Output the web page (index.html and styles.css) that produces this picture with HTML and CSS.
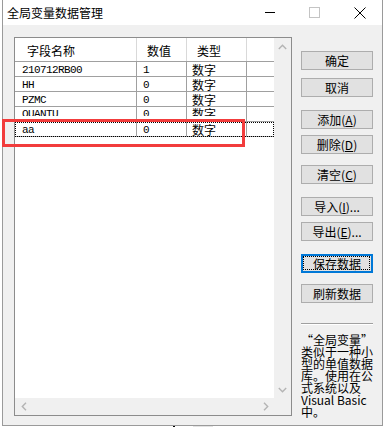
FILE: index.html
```html
<!DOCTYPE html>
<html lang="zh-CN">
<head>
    <meta charset="UTF-8">
    <meta name="viewport" content="width=device-width, initial-scale=1.0">
    <title>全局变量数据管理</title>
    <link rel="stylesheet" href="styles.css">
</head>
<body>
    <div class="window">
        <div class="titlebar">
            <span class="title">全局变量数据管理</span>
            <span class="ctl"><svg width="10" height="1"><rect width="10" height="1" fill="#000"/></svg></span>
            <span class="ctl"><svg width="11" height="11"><rect x="0.5" y="0.5" width="10" height="10" fill="none" stroke="#c4c4c4"/></svg></span>
            <span class="ctl"><svg width="12" height="12"><path d="M0.5 0.5 L11.5 11.5 M11.5 0.5 L0.5 11.5" stroke="#000" stroke-width="1" fill="none"/></svg></span>
        </div>
        <div class="client">
            <div class="list">
                <div class="list-main">
                    <div class="grid">
                        <div class="row head">
                            <div class="cell c1">字段名称</div>
                            <div class="cell c2">数值</div>
                            <div class="cell c3">类型</div>
                            <div class="cell c4"></div>
                        </div>
                        <div class="row">
                            <div class="cell c1 mono">210712RB00</div>
                            <div class="cell c2 mono">1</div>
                            <div class="cell c3">数字</div>
                            <div class="cell c4"></div>
                        </div>
                        <div class="row">
                            <div class="cell c1 mono">HH</div>
                            <div class="cell c2 mono">0</div>
                            <div class="cell c3">数字</div>
                            <div class="cell c4"></div>
                        </div>
                        <div class="row">
                            <div class="cell c1 mono">PZMC</div>
                            <div class="cell c2 mono">0</div>
                            <div class="cell c3">数字</div>
                            <div class="cell c4"></div>
                        </div>
                        <div class="row">
                            <div class="cell c1 mono"><span class="clip">QUANTU</span></div>
                            <div class="cell c2 mono"><span class="clip">0</span></div>
                            <div class="cell c3"><span class="clip">数字</span></div>
                            <div class="cell c4"></div>
                        </div>
                        <div class="row selected">
                            <div class="cell c1 mono">aa</div>
                            <div class="cell c2 mono">0</div>
                            <div class="cell c3">数字</div>
                            <div class="cell c4"></div>
                        </div>
                    </div>
                    <div class="vscroll">
                        <div class="arrow"><svg width="9" height="6"><polyline points="0.8,5 4.5,1.3 8.2,5" fill="none" stroke="#b4b4b4" stroke-width="1.4"/></svg></div>
                        <div class="arrow"><svg width="9" height="6"><polyline points="0.8,1 4.5,4.7 8.2,1" fill="none" stroke="#b4b4b4" stroke-width="1.4"/></svg></div>
                    </div>
                </div>
                <div class="hscroll">
                    <div class="htrack">
                        <div class="arrow"><svg width="6" height="9"><polyline points="5,0.8 1.3,4.5 5,8.2" fill="none" stroke="#b4b4b4" stroke-width="1.4"/></svg></div>
                        <div class="arrow"><svg width="6" height="9"><polyline points="1,0.8 4.7,4.5 1,8.2" fill="none" stroke="#b4b4b4" stroke-width="1.4"/></svg></div>
                    </div>
                    <div class="corner"></div>
                </div>
            </div>
            <div class="side">
                <div class="btn">确定</div>
                <div class="btn gap-m">取消</div>
                <div class="btn gap-xl">添加(<u>A</u>)</div>
                <div class="btn gap-s">删除(<u>D</u>)</div>
                <div class="btn gap-l">清空(<u>C</u>)</div>
                <div class="btn gap-xl">导入(<u>I</u>)...</div>
                <div class="btn gap-s">导出(<u>E</u>)...</div>
                <div class="btn gap-xl focus">保存数据</div>
                <div class="btn gap-l">刷新数据</div>
                <div class="sep"></div>
                <div class="note">“全局变量”<br>类似于一种小<br>型的单值数据<br>库。使用在公<br>式系统以及<br>Visual Basic<br>中。</div>
            </div>
        </div>
    </div>
    <div class="desk">
        <span class="desk-gap"></span>
        <span class="desk-bar"></span>
        <span class="desk-box"></span>
    </div>
    <div class="mark"></div>
</body>
</html>
```

FILE: styles.css
```css
body { margin: 0; background: #fff; font-family: "Noto Sans CJK SC", sans-serif; font-size: 12px; color: #000; }
.window { margin-left: 2px; width: 379px; border: 1px solid #9a9a9a; border-top: none; }
.titlebar { height: 25px; background: #fff; display: flex; align-items: center; }
.title { flex: 1; padding-left: 4px; line-height: 25px; }
.ctl { width: 45px; height: 25px; display: flex; align-items: center; justify-content: center; }

.client { background: #f0f0f0; display: flex; padding: 12px 0 7px 11px; }
.list { width: 278px; height: 379px; box-sizing: border-box; border: 1px solid #8c8c8c; background: #fff;
        display: flex; flex-direction: column; }
.list-main { display: flex; height: 360px; }
.grid { width: 259px; }
.vscroll { width: 17px; background: #f0f0f0; display: flex; flex-direction: column; justify-content: space-between; }
.arrow { width: 17px; height: 17px; display: flex; align-items: center; justify-content: center; }
.hscroll { height: 17px; display: flex; }
.htrack { width: 259px; background: #f0f0f0; display: flex; justify-content: space-between; }
.corner { flex: 1; background: #f0f0f0; }

.row { display: flex; height: 15px; box-sizing: border-box; border-bottom: 1px solid #a0a0a0; }
.cell { box-sizing: border-box; height: 100%; border-right: 1px solid #a0a0a0; overflow: hidden; white-space: nowrap;
        line-height: 12px; padding-top: 2px; }
.c1 { width: 122px; padding-left: 7px; }
.c2 { width: 50px; padding-left: 6px; }
.c3 { width: 60px; padding-left: 5px; }
.c4 { flex: 1; border-right: none; }
.mono { font-family: "Liberation Mono", monospace; font-size: 11px; letter-spacing: -0.6px; }
.clip { display: block; height: 8px; overflow: hidden; margin-top: -1px; }
.head { height: 24px; }
.head .cell { border-right-color: #d9d9d9; line-height: 20px; padding-top: 3px; }
.head .c1 { padding-left: 12px; }
.head .c2, .head .c3 { padding-left: 10px; }
.selected { outline: 1px dotted #000; outline-offset: -1px; }

.side { margin-left: 9px; width: 72px; padding-top: 14px; display: flex; flex-direction: column; }
.btn { position: relative; height: 19px; box-sizing: border-box; border: 1px solid #adadad; background: #e1e1e1;
       text-align: center; line-height: 17px; white-space: nowrap; }
.btn u { text-underline-offset: 1px; }
.gap-s { margin-top: 6px; }
.gap-m { margin-top: 8px; }
.gap-l { margin-top: 11px; }
.gap-xl { margin-top: 13px; }
.focus { border-color: #0078d7; box-shadow: inset 0 0 0 1px #0078d7; }
.focus::after { content: ""; position: absolute; left: 1px; top: 1px; right: 2px; bottom: 2px; border: 1px dotted #000; }
.sep { margin-top: 20px; height: 0; border-top: 1px solid #a0a0a0; border-bottom: 1px solid #fff; }
.note { margin-top: 9px; line-height: 12px; white-space: nowrap; }

.desk { display: flex; height: 3px; }
.desk-gap { width: 173px; }
.desk-bar { width: 2px; background: #000; }
.desk-gap + .desk-bar + .desk-box { margin-left: 18px; width: 20px; background: #e3e3e3; }

.mark { position: absolute; left: 2px; top: 119px; width: 243px; height: 28px; box-sizing: border-box;
        border: 3px solid #f23c3c; }
```
